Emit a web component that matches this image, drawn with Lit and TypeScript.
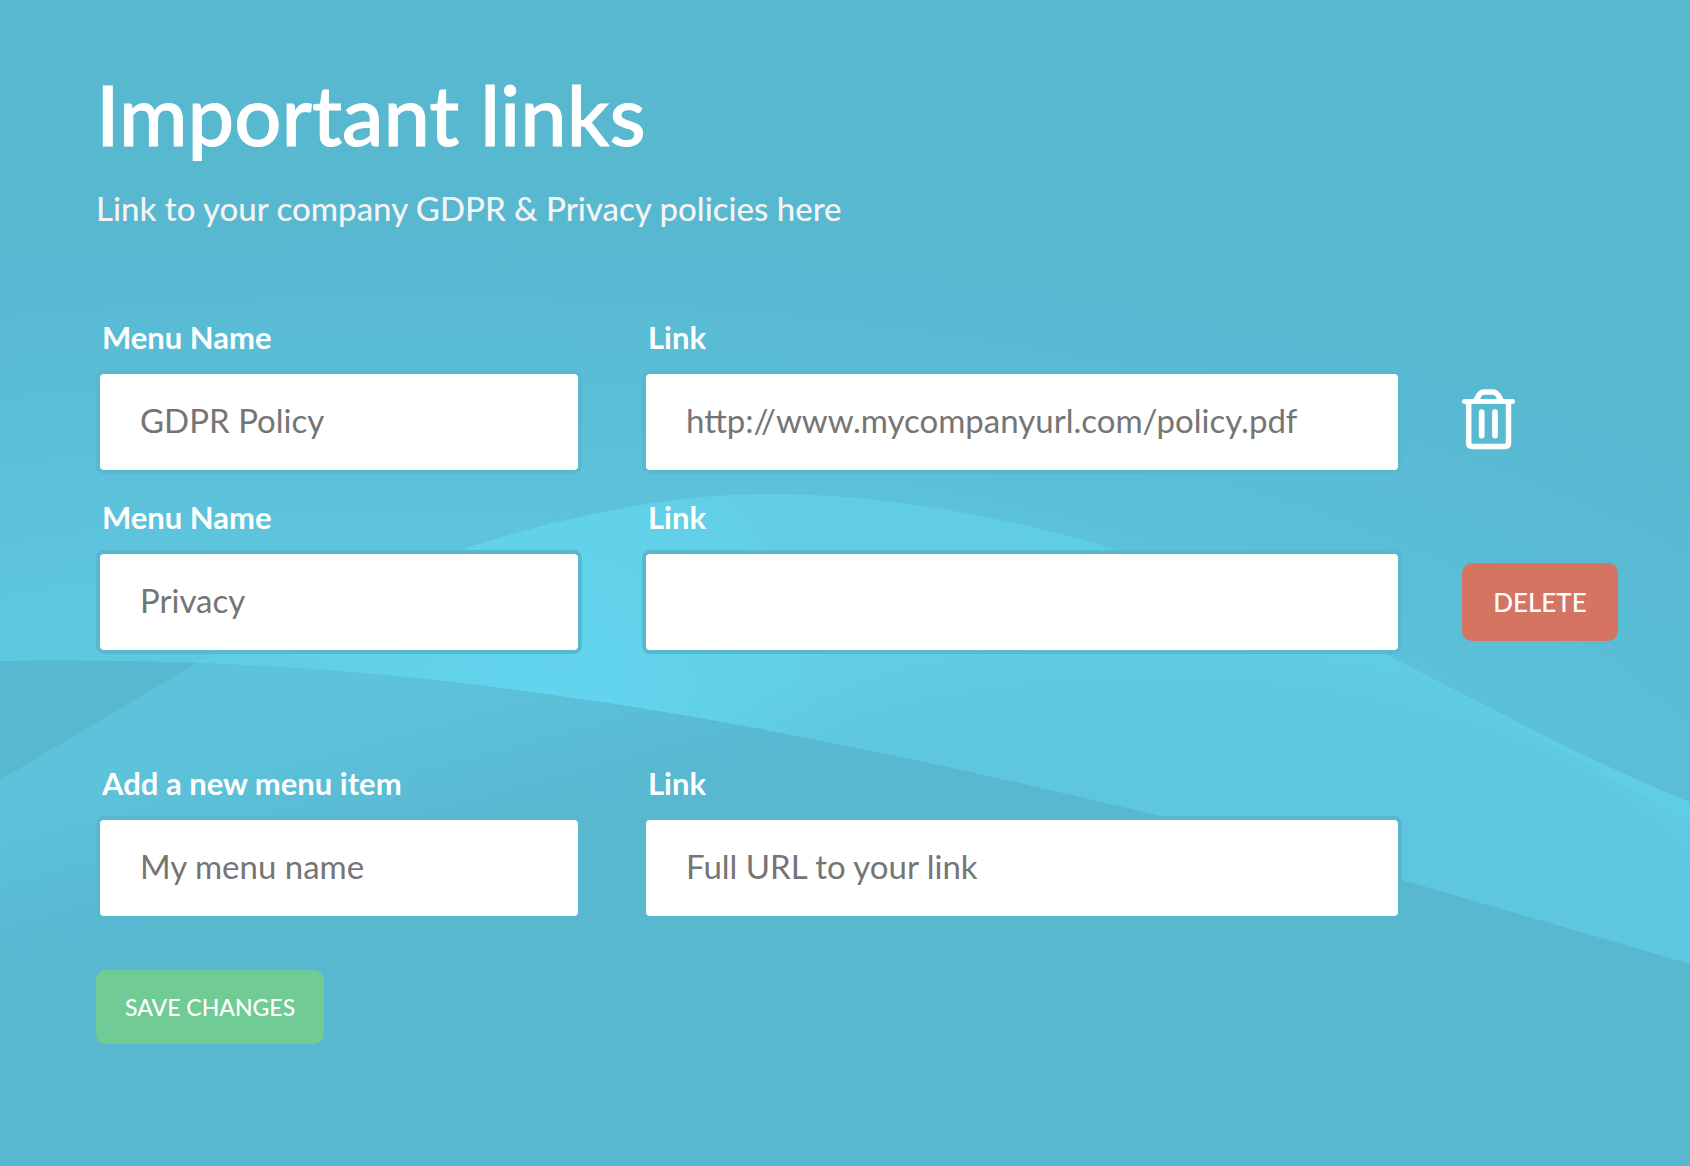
import { LitElement, html, css, svg, nothing } from "lit";
import { customElement, property, state } from "lit/decorators.js";

interface MenuItem {
  id: string;
  nameLabel: string;
  namePlaceholder: string;
  linkPlaceholder: string;
  action: "trash" | "delete" | "none";
}

@customElement("wave-backdrop")
export class WaveBackdrop extends LitElement {
  static styles = css`
    :host {
      display: block;
    }
    .waves {
      display: block;
      width: 100%;
      height: 100%;
    }
  `;

  render() {
    return html`
      <svg class="waves" viewBox="0 0 1690 1166" preserveAspectRatio="none" aria-hidden="true">
        ${svg`
          <defs>
            <radialGradient id="sky" gradientUnits="userSpaceOnUse" cx="0" cy="0" r="680"
              gradientTransform="translate(400 900) scale(2.6 1)">
              <stop offset="0.42" stop-color="#5fc8e0" />
              <stop offset="0.7" stop-color="#5bbfd8" />
              <stop offset="1" stop-color="#57b8d0" />
            </radialGradient>
            <radialGradient id="hill" gradientUnits="userSpaceOnUse" cx="560" cy="680" r="500">
              <stop offset="0" stop-color="#63d4ee" />
              <stop offset="0.25" stop-color="#62d2eb" />
              <stop offset="0.6" stop-color="#61cde4" />
              <stop offset="1" stop-color="#60cde6" />
            </radialGradient>
            <radialGradient id="slope" gradientUnits="userSpaceOnUse" cx="0" cy="0" r="320"
              gradientTransform="translate(1150 950) scale(2.1 1)">
              <stop offset="0.75" stop-color="#5ec6de" />
              <stop offset="1" stop-color="#5ec6de" stop-opacity="0" />
            </radialGradient>
            <linearGradient id="shore" gradientUnits="userSpaceOnUse" x1="0" y1="790" x2="48" y2="966">
              <stop offset="0" stop-color="#5dc3db" />
              <stop offset="1" stop-color="#57b8d0" />
            </linearGradient>
          </defs>
          <rect width="1690" height="1166" fill="url(#sky)" />
          <path
            d="M0 780 L197 663 C290 610 380 575 459 550 C570 515 670 494 770 494 C890 494 1010 518 1118 550
               C1210 578 1300 612 1385 654 L1523 725 C1580 754 1640 782 1690 802 V970 H0 Z"
            fill="url(#hill)"
          />
          <path d="M560 600 H1280 L1385 654 L1523 727 L1600 772 L1690 823 V970 H560 Z" fill="url(#slope)" />
          <path
            d="M0 661 C80 660 140 661 197 663 C340 668 480 683 620 705 C800 733 980 773 1160 816
               C1250 838 1330 860 1402 880 L1690 964 V1166 H0 Z"
            fill="#57b8d0"
          />
          <path
            d="M0 780 L197 663 C340 668 480 683 620 705 C800 733 980 773 1160 816 V1166 H0 Z"
            fill="url(#shore)"
          />
        `}
      </svg>
    `;
  }
}

@customElement("trash-icon")
export class TrashIcon extends LitElement {
  static styles = css`
    :host {
      display: block;
    }
    .icon {
      display: block;
      width: 54px;
      height: 62px;
    }
  `;

  render() {
    return html`
      <svg class="icon" viewBox="0 0 54 62" fill="none" stroke="#fff" stroke-linejoin="round" stroke-linecap="round" aria-hidden="true">
        <path d="M2.500 12.500 H50.500" stroke-width="5" />
        <path d="M6.700 13 V54 Q6.700 57.500 10.500 57.500 H42.700 Q46.500 57.500 46.500 54 V13" stroke-width="5.500" />
        <path d="M13.500 12 L17 6 Q19 3 22 3 H31 Q34 3 36 6 L39.500 12" stroke-width="5.500" />
        <path d="M19.700 23.200 V46.500 M33 23.200 V46.500" stroke-width="5.800" />
      </svg>
    `;
  }
}

@customElement("menu-row")
export class MenuRow extends LitElement {
  @property({ attribute: false }) item!: MenuItem;

  static styles = css`
    :host {
      display: block;
    }
    .row {
      display: grid;
      grid-template-columns: minmax(0, 486fr) minmax(0, 760fr) 156px;
      column-gap: 60px;
      align-items: end;
    }
    .field {
      display: flex;
      flex-direction: column;
      gap: 14px;
    }
    .label {
      padding-left: 6px;
      font-size: 31px;
      line-height: 38px;
      font-weight: 700;
      color: #fff;
    }
    .input {
      box-sizing: border-box;
      width: 100%;
      height: 104px;
      margin: 0;
      padding: 0 40px 4px;
      border: 4px solid #57b8d0;
      border-radius: 8px;
      background: #fff;
      font: inherit;
      font-size: 33px;
      color: #757575;
      outline: none;
    }
    .input::placeholder {
      color: #757575;
      opacity: 1;
    }
    .action {
      display: flex;
      align-items: center;
      height: 104px;
    }
    .trash {
      margin: 0;
      padding: 0 0 4px;
      border: 0;
      background: none;
      cursor: pointer;
    }
    .delete {
      width: 100%;
      height: 78px;
      margin: 0;
      padding: 0;
      border: 0;
      border-radius: 10px;
      background: #d57461;
      color: #fff;
      font: inherit;
      font-size: 26px;
      font-weight: 500;
      cursor: pointer;
    }
  `;

  private renderAction() {
    if (this.item.action === "trash") {
      return html`<button class="trash" type="button" aria-label="Delete"><trash-icon></trash-icon></button>`;
    }
    if (this.item.action === "delete") {
      return html`<button class="delete" type="button">DELETE</button>`;
    }
    return nothing;
  }

  render() {
    const { id, nameLabel, namePlaceholder, linkPlaceholder } = this.item;
    return html`
      <div class="row">
        <div class="field">
          <label class="label" for="${id}-name">${nameLabel}</label>
          <input class="input" id="${id}-name" type="text" placeholder=${namePlaceholder} />
        </div>
        <div class="field">
          <label class="label" for="${id}-link">Link</label>
          <input class="input" id="${id}-link" type="url" placeholder=${linkPlaceholder} />
        </div>
        <div class="action">${this.renderAction()}</div>
      </div>
    `;
  }
}

@customElement("app-root")
export class AppRoot extends LitElement {
  @state() private items: MenuItem[] = [
    {
      id: "gdpr",
      nameLabel: "Menu Name",
      namePlaceholder: "GDPR Policy",
      linkPlaceholder: "http://www.mycompanyurl.com/policy.pdf",
      action: "trash",
    },
    { id: "privacy", nameLabel: "Menu Name", namePlaceholder: "Privacy", linkPlaceholder: "", action: "delete" },
  ];

  private draft: MenuItem = {
    id: "draft",
    nameLabel: "Add a new menu item",
    namePlaceholder: "My menu name",
    linkPlaceholder: "Full URL to your link",
    action: "none",
  };

  static styles = css`
    :host {
      display: block;
      position: relative;
      min-height: 100vh;
      background: #57b8d0;
      font-family: Lato, "Open Sans", sans-serif;
    }
    .backdrop {
      position: absolute;
      inset: 0;
    }
    .page {
      position: relative;
      box-sizing: border-box;
      padding: 64px 72px 80px 96px;
    }
    .title {
      margin: 0;
      font-size: 83px;
      line-height: 100px;
      font-weight: 500;
      color: #fff;
      -webkit-text-stroke: 1px #fff;
    }
    .subtitle {
      margin: 22px 0 0;
      font-size: 33px;
      line-height: 44px;
      font-weight: 500;
      color: #f4f4f4;
    }
    .form {
      margin-top: 88px;
    }
    .rows {
      display: flex;
      flex-direction: column;
      gap: 24px;
    }
    .draft {
      margin-top: 110px;
    }
    .save {
      height: 74px;
      margin: 50px 0 0;
      padding: 0 29px;
      border: 0;
      border-radius: 10px;
      background: #71cb94;
      color: #fff;
      font: inherit;
      font-size: 23px;
      font-weight: 500;
      cursor: pointer;
    }
  `;

  render() {
    return html`
      <wave-backdrop class="backdrop"></wave-backdrop>
      <main class="page">
        <h1 class="title">Important links</h1>
        <p class="subtitle">Link to your company GDPR &amp; Privacy policies here</p>
        <form class="form" @submit=${(e: Event) => e.preventDefault()}>
          <div class="rows">${this.items.map((item) => html`<menu-row .item=${item}></menu-row>`)}</div>
          <menu-row class="draft" .item=${this.draft}></menu-row>
          <button class="save" type="submit">SAVE CHANGES</button>
        </form>
      </main>
    `;
  }
}
